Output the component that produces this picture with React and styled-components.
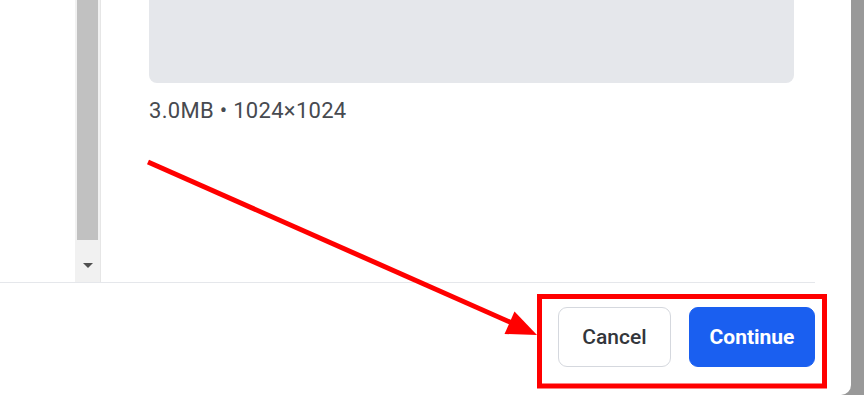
import React from "react";
import styled, { createGlobalStyle } from "styled-components";

const GlobalStyle = createGlobalStyle`
  html, body {
    margin: 0;
    padding: 0;
    background: #999999;
    font-family: Roboto, "Liberation Sans", Arial, sans-serif;
    overflow: hidden;
  }
`;

const Page = styled.div`
  position: relative;
  width: 864px;
  height: 395px;
  background: #999999;
`;

const Dialog = styled.div`
  width: 851px;
  height: 395px;
  background: #fff;
  border-bottom-right-radius: 10px;
  display: flex;
  flex-direction: column;
`;

const Body = styled.div`
  height: 282px;
  display: flex;
`;

const SidePane = styled.div`
  width: 75px;
  background: #fff;
`;

const ScrollTrack = styled.div`
  width: 25px;
  background: #f1f1f1;
  border-right: 1px solid #e6e6e6;
  display: flex;
  flex-direction: column;
  align-items: center;
`;

const ScrollThumb = styled.div`
  width: 21px;
  height: 240px;
  background: #c1c1c1;
`;

const ScrollButton = styled.div`
  flex: 1;
  display: flex;
  align-items: center;
  justify-content: center;
`;

const DownArrow = styled.div`
  width: 0;
  height: 0;
  border-left: 5px solid transparent;
  border-right: 5px solid transparent;
  border-top: 5px solid #505050;
  margin-top: 8px;
`;

const Content = styled.div`
  flex: 1;
  padding: 0 57px 0 48px;
`;

const Preview = styled.div`
  height: 83px;
  background: #e5e7eb;
  border-radius: 0 0 8px 8px;
`;

const Meta = styled.p`
  margin: 11px 0 0;
  font-size: 22px;
  line-height: 33px;
  letter-spacing: 0.3px;
  color: #474a50;
`;

const Footer = styled.div`
  margin-right: 36px;
  border-top: 1px solid #e5e7eb;
  display: flex;
  justify-content: flex-end;
  gap: 18px;
  padding-top: 24px;
`;

const Button = styled.button`
  height: 60px;
  width: ${(p) => p.$w}px;
  padding: 0;
  border-radius: 9px;
  font-family: Roboto, "Liberation Sans", Arial, sans-serif;
  font-size: 21px;
  cursor: pointer;
  border: 1px solid ${(p) => (p.$primary ? "#1a5ff0" : "#d5d8de")};
  background: ${(p) => (p.$primary ? "#1a5ff0" : "#fff")};
  color: ${(p) => (p.$primary ? "#fff" : "#33363b")};
  font-weight: ${(p) => (p.$primary ? 700 : 500)};
`;

const Annotation = styled.svg`
  position: absolute;
  left: 0;
  top: 0;
  pointer-events: none;
`;

export default function App() {
  return (
    <Page>
      <GlobalStyle />
      <Dialog>
        <Body>
          <SidePane />
          <ScrollTrack>
            <ScrollThumb />
            <ScrollButton>
              <DownArrow />
            </ScrollButton>
          </ScrollTrack>
          <Content>
            <Preview />
            <Meta>3.0MB • 1024×1024</Meta>
          </Content>
        </Body>
        <Footer>
          <Button $w={113}>Cancel</Button>
          <Button $w={126} $primary>
            Continue
          </Button>
        </Footer>
      </Dialog>
      <Annotation width="864" height="395" viewBox="0 0 864 395">
        <line x1="148" y1="162" x2="512" y2="323" stroke="#ff0000" strokeWidth="5" />
        <polygon points="537,335 504.5,334 514.5,311.5" fill="#ff0000" />
        <rect x="539.5" y="296.5" width="285" height="89.5" fill="none" stroke="#ff0000" strokeWidth="5" />
      </Annotation>
    </Page>
  );
}
